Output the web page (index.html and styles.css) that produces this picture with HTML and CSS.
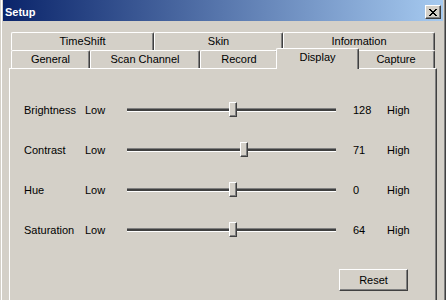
FILE: index.html
```html
<!DOCTYPE html>
<html lang="en">
<head>
    <meta charset="UTF-8">
    <title>Setup</title>
    <link rel="stylesheet" href="styles.css">
</head>
<body>
    <div class="window">
        <!-- title bar -->
        <div class="titlebar">
            <span class="title">Setup</span>
            <button class="close" type="button">
                <svg width="8" height="7" viewBox="0 0 8 7" shape-rendering="crispEdges">
                    <path d="M0 0h2v1h1v1h2v-1h1v-1h2v1h-1v1h-1v1h-1v1h1v1h1v1h1v1h-2v-1h-1v-1h-2v1h-1v1h-2v-1h1v-1h1v-1h1v-1h-1v-1h-1v-1h-1z" fill="#000"/>
                </svg>
            </button>
        </div>

        <div class="content">
            <!-- tabs -->
            <div class="tabs">
                <div class="tab-row">
                    <div class="tab" style="width: 143px">TimeShift</div>
                    <div class="tab" style="width: 129px">Skin</div>
                    <div class="tab" style="width: 152px">Information</div>
                </div>
                <div class="tab-row">
                    <div class="tab" style="width: 79px">General</div>
                    <div class="tab" style="width: 110px">Scan Channel</div>
                    <div class="tab" style="width: 78px">Record</div>
                    <div class="tab selected" style="width: 83px">Display</div>
                    <div class="tab" style="width: 78px">Capture</div>
                </div>
            </div>

            <!-- display page -->
            <div class="panel">
                <div class="row">
                    <span class="name">Brightness</span>
                    <span class="low">Low</span>
                    <div class="track"><span class="thumb" style="left: 102px"></span></div>
                    <span class="value">128</span>
                    <span class="high">High</span>
                </div>
                <div class="row">
                    <span class="name">Contrast</span>
                    <span class="low">Low</span>
                    <div class="track"><span class="thumb" style="left: 113px"></span></div>
                    <span class="value">71</span>
                    <span class="high">High</span>
                </div>
                <div class="row">
                    <span class="name">Hue</span>
                    <span class="low">Low</span>
                    <div class="track"><span class="thumb" style="left: 102px"></span></div>
                    <span class="value">0</span>
                    <span class="high">High</span>
                </div>
                <div class="row">
                    <span class="name">Saturation</span>
                    <span class="low">Low</span>
                    <div class="track"><span class="thumb" style="left: 102px"></span></div>
                    <span class="value">64</span>
                    <span class="high">High</span>
                </div>
                <div class="actions">
                    <button class="btn" type="button">Reset</button>
                </div>
            </div>
        </div>
    </div>
</body>
</html>
```

FILE: styles.css
```css
/* general */
body {
    margin: 0;
    font-family: "Liberation Sans", Arial, sans-serif;
    font-size: 11px;
    color: #000;
    background-color: #d4d0c8;
}

.window {
    width: 446px;
    height: 300px;
    box-sizing: border-box;
    overflow: hidden;
    border-left: 1px solid #d4d0c8;
    border-right: 1px solid #404040;
    box-shadow: inset 1px 0 0 #fff, inset -1px 0 0 #808080;
    padding: 0 2px;
    background-color: #d4d0c8;
}

/* title bar */
.titlebar {
    height: 21px;
    box-sizing: border-box;
    padding: 3px 2px 0 2px;
    display: flex;
    align-items: center;
    justify-content: space-between;
    background: linear-gradient(to right, #0a246a, #a6caf0);
}
.title {
    color: #fff;
    font-weight: bold;
    font-size: 11px;
}
.close {
    width: 16px;
    height: 14px;
    padding: 0;
    display: flex;
    align-items: center;
    justify-content: center;
    background-color: #d4d0c8;
    border: 1px solid;
    border-color: #fff #404040 #404040 #fff;
    box-shadow: inset -1px -1px 0 #808080;
}

/* tabs */
.content {
    padding: 11px 6px 0 6px;
}
.tabs {
    padding: 0 2px;
}
.tab-row {
    display: flex;
    height: 18px;
}
.tab {
    box-sizing: border-box;
    height: 18px;
    line-height: 17px;
    text-align: center;
    border-top: 1px solid #fff;
    border-left: 1px solid #fff;
    border-right: 1px solid #404040;
    box-shadow: inset -1px 0 0 #808080;
    border-radius: 2px 2px 0 0;
    background-color: #d4d0c8;
}
.tab.selected {
    position: relative;
    z-index: 1;
    height: 21px;
    line-height: 16px;
    margin: -2px -2px -1px -2px;
}

/* panel */
.panel {
    height: 240px;
    border-top: 1px solid #fff;
    border-left: 1px solid #fff;
    border-right: 1px solid #404040;
    box-shadow: inset -1px 0 0 #808080;
    padding: 21px 0 0 14px;
}
.row {
    display: flex;
    align-items: center;
    height: 40px;
}
.name {
    width: 61px;
}
.low {
    width: 42px;
}
.track {
    position: relative;
    width: 209px;
    height: 2px;
    border-top: 1px solid #808080;
    border-bottom: 1px solid #fff;
    background-color: #404040;
    margin-top: -1px;
}
.thumb {
    position: absolute;
    top: -7px;
    width: 8px;
    height: 15px;
    box-sizing: border-box;
    background-color: #d4d0c8;
    border: 1px solid;
    border-color: #fff #404040 #404040 #fff;
    box-shadow: inset -1px -1px 0 #808080;
}
.value {
    width: 34px;
    margin-left: 17px;
}

/* buttons */
.actions {
    display: flex;
    justify-content: flex-end;
    padding: 19px 28px 0 0;
}
.btn {
    width: 69px;
    height: 22px;
    padding: 0;
    font-family: inherit;
    font-size: 11px;
    color: #000;
    background-color: #d4d0c8;
    border: 1px solid;
    border-color: #fff #404040 #404040 #fff;
    box-shadow: inset -1px -1px 0 #808080;
}
```
